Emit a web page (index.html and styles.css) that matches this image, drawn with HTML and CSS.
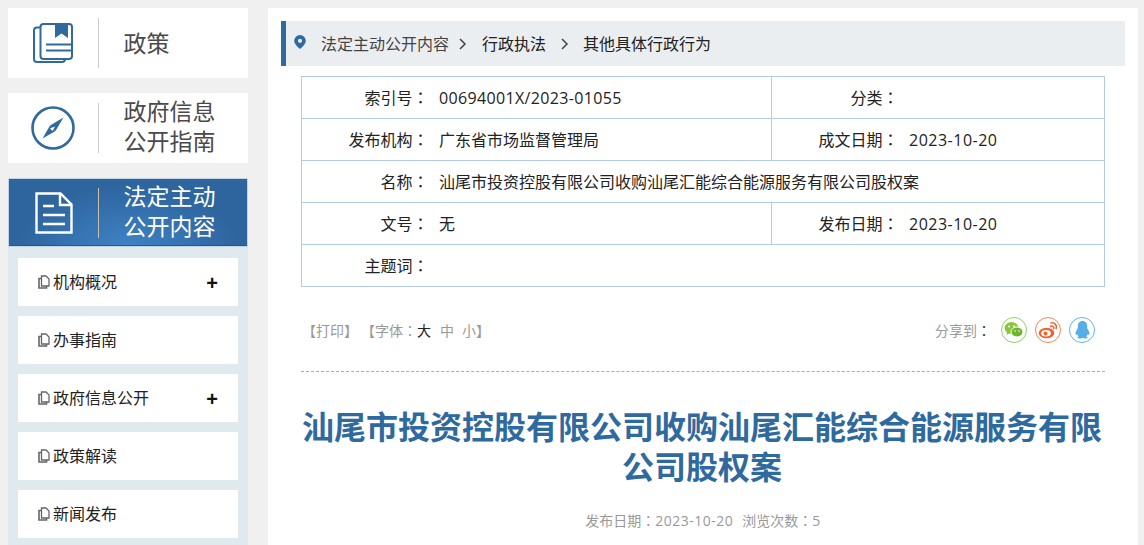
FILE: index.html
```html
<!DOCTYPE html>
<html lang="zh-CN">
<head>
<meta charset="utf-8">
<title>汕尾市投资控股有限公司收购汕尾汇能综合能源服务有限公司股权案</title>
<link rel="stylesheet" href="styles.css">
</head>
<body>
<div class="page">
  <aside class="side">
    <a class="head">
      <span class="head-icon">
        <svg width="42" height="42" viewBox="0 0 42 42" fill="none" stroke="#2f6a9f" stroke-width="2">
          <path d="M8 5.500H5a3 3 0 0 0-3 3V37a3 3 0 0 0 3 3h25a3 3 0 0 0 3-3v-.5"/>
          <rect x="8.500" y="2" width="31.500" height="35" rx="3"/>
          <path d="M23 2h13v14l-6.500-4.500L23 16z" fill="#2f6a9f" stroke="none"/>
          <path d="M14 22.500h25M14 28.500h25"/>
        </svg>
      </span>
      <span class="head-text one"><span class="ln">政策</span></span>
    </a>
    <a class="head">
      <span class="head-icon">
        <svg width="44" height="44" viewBox="0 0 44 44" fill="none">
          <circle cx="22" cy="22" r="20.500" stroke="#2f6a9f" stroke-width="2.600"/>
          <path d="M32.500 11.500 24.500 25 19 19.500z" fill="#2f6a9f"/>
          <path d="M11.500 32.500 19 19.500 24.500 25z" fill="#2f6a9f"/>
          <path d="M19 22.500 24 20.500 21.500 25z" fill="#fff"/>
        </svg>
      </span>
      <span class="head-text two"><span class="ln">政府信息</span><span class="ln">公开指南</span></span>
    </a>
    <a class="head head-on">
      <span class="head-icon">
        <svg width="38" height="42" viewBox="0 0 38 42" fill="none" stroke="#fff" stroke-width="2.400">
          <path d="M1.500 1.500h24l11 11v28h-35z"/>
          <path d="M25 2v11h11"/>
          <path d="M8 14h11M8 23h22M8 32h22"/>
        </svg>
      </span>
      <span class="head-text two"><span class="ln">法定主动</span><span class="ln">公开内容</span></span>
    </a>
    <ul class="sub">
      <li class="sub-item"><svg class="doc" width="12" height="14" viewBox="0 0 12 14" fill="none" stroke="#666" stroke-width="1.300"><path d="M3.500 1h4.500l3 3v7h-7.500z"/><path d="M3.500 3.500H1v9.500h7.500v-2" stroke-width="1.600"/></svg><span class="sub-text">机构概况</span><b class="plus">+</b></li>
      <li class="sub-item"><svg class="doc" width="12" height="14" viewBox="0 0 12 14" fill="none" stroke="#666" stroke-width="1.300"><path d="M3.500 1h4.500l3 3v7h-7.500z"/><path d="M3.500 3.500H1v9.500h7.500v-2" stroke-width="1.600"/></svg><span class="sub-text">办事指南</span></li>
      <li class="sub-item"><svg class="doc" width="12" height="14" viewBox="0 0 12 14" fill="none" stroke="#666" stroke-width="1.300"><path d="M3.500 1h4.500l3 3v7h-7.500z"/><path d="M3.500 3.500H1v9.500h7.500v-2" stroke-width="1.600"/></svg><span class="sub-text">政府信息公开</span><b class="plus">+</b></li>
      <li class="sub-item"><svg class="doc" width="12" height="14" viewBox="0 0 12 14" fill="none" stroke="#666" stroke-width="1.300"><path d="M3.500 1h4.500l3 3v7h-7.500z"/><path d="M3.500 3.500H1v9.500h7.500v-2" stroke-width="1.600"/></svg><span class="sub-text">政策解读</span></li>
      <li class="sub-item"><svg class="doc" width="12" height="14" viewBox="0 0 12 14" fill="none" stroke="#666" stroke-width="1.300"><path d="M3.500 1h4.500l3 3v7h-7.500z"/><path d="M3.500 3.500H1v9.500h7.500v-2" stroke-width="1.600"/></svg><span class="sub-text">新闻发布</span></li>
    </ul>
  </aside>

  <main class="main">
    <nav class="crumb">
      <svg class="pin" width="12" height="14" viewBox="0 0 12 14"><path fill-rule="evenodd" fill="#2f6a9f" d="M6 0a5.800 5.800 0 0 1 5.800 5.800C11.800 9 8 12.500 6 14 4 12.500.2 9 .2 5.800A5.800 5.800 0 0 1 6 0zm0 3.700a2.100 2.100 0 1 0 0 4.200 2.100 2.100 0 0 0 0-4.200z"/></svg>
      <span class="crumb-first">法定主动公开内容</span>
      <svg class="chev chev-a" width="8" height="12" viewBox="0 0 8 12" fill="none" stroke="#444" stroke-width="1.500"><path d="M1 1l5 5-5 5"/></svg>
      <span class="crumb-link">行政执法</span>
      <svg class="chev chev-b" width="8" height="12" viewBox="0 0 8 12" fill="none" stroke="#444" stroke-width="1.500"><path d="M1 1l5 5-5 5"/></svg>
      <span class="crumb-link">其他具体行政行为</span>
    </nav>

    <table class="info">
      <colgroup><col class="c1"><col class="c2"><col class="c3"><col class="c4"></colgroup>
      <tr><th>索引号<i class="p" lang="zh-TW">：</i></th><td><span class="num num-long">00694001X/2023-01055</span></td><th>分类<i class="p" lang="zh-TW">：</i></th><td></td></tr>
      <tr><th>发布机构<i class="p" lang="zh-TW">：</i></th><td>广东省市场监督管理局</td><th>成文日期<i class="p" lang="zh-TW">：</i></th><td><span class="num">2023-10-20</span></td></tr>
      <tr><th>名称<i class="p" lang="zh-TW">：</i></th><td colspan="3">汕尾市投资控股有限公司收购汕尾汇能综合能源服务有限公司股权案</td></tr>
      <tr><th>文号<i class="p" lang="zh-TW">：</i></th><td>无</td><th>发布日期<i class="p" lang="zh-TW">：</i></th><td><span class="num">2023-10-20</span></td></tr>
      <tr><th>主题词<i class="p" lang="zh-TW">：</i></th><td colspan="3"></td></tr>
    </table>

    <div class="tools">
      <div class="tools-left">
        <span><i class="p" lang="zh-TW">【</i>打印<i class="p" lang="zh-TW">】</i></span>
        <span class="fontset"><i class="p" lang="zh-TW">【</i>字体<i class="p" lang="zh-TW">：</i><b class="size-on">大</b><b class="size">中</b><b class="size">小</b><i class="p" lang="zh-TW">】</i></span>
      </div>
      <div class="share">
        <span class="share-label">分享到<i class="p colon" lang="zh-TW">：</i></span>
        <span class="ring ring-wx">
          <svg width="20" height="18" viewBox="0 0 20 18"><ellipse cx="7.500" cy="7" rx="7" ry="6" fill="#8cc63f"/><path d="M3 11l-.5 3 3.500-2z" fill="#8cc63f"/><ellipse cx="13" cy="11" rx="6" ry="5" fill="#6fb52c" stroke="#fff" stroke-width="1"/><circle cx="5" cy="5.500" r="1" fill="#fff"/><circle cx="10" cy="5.500" r="1" fill="#fff"/><circle cx="11" cy="10" r=".8" fill="#fff"/><circle cx="15" cy="10" r=".8" fill="#fff"/></svg>
        </span>
        <span class="ring ring-wb">
          <svg width="20" height="18" viewBox="0 0 20 18" fill="none"><ellipse cx="8.500" cy="12" rx="7.800" ry="5.200" fill="#f0622e"/><ellipse cx="8" cy="12.300" rx="4.800" ry="3.300" fill="#fff"/><circle cx="7.500" cy="12.500" r="2" fill="#f0622e"/><path d="M12 5.500c3-1.500 4.500.5 3.500 3" stroke="#f0622e" stroke-width="1.500"/><path d="M12.500 2c4-1 7 2 5.500 6" stroke="#f0622e" stroke-width="1.500"/></svg>
        </span>
        <span class="ring ring-qq">
          <svg width="15" height="18" viewBox="0 0 16 19"><path fill="#55aee8" d="M8 0c3.300 0 5 2.500 5 5.500v2c1.300 2 2.500 4 2.500 6 0 1.500-.8 1.500-2 .5-.3 1-.8 1.800-1.500 2.400 1 .4 1.500.8 1.500 1.300 0 .5-1.500.8-3 .8-1 0-2-.3-2.500-.8-.5.500-1.500.8-2.500.8-1.500 0-3-.3-3-.8 0-.5.500-.9 1.500-1.300C3.300 15.800 2.800 15 2.500 14c-1.200 1-2 1-2-.5 0-2 1.200-4 2.500-6v-2C3 2.500 4.700 0 8 0z"/></svg>
        </span>
      </div>
    </div>

    <h1 class="title">汕尾市投资控股有限公司收购汕尾汇能综合能源服务有限公司股权案</h1>
    <p class="meta">发布日期<i class="p" lang="zh-TW">：</i><span class="num">2023-10-20</span><span class="meta-gap">浏览次数<i class="p" lang="zh-TW">：</i><span class="num">5</span></span></p>
  </main>
</div>
</body>
</html>
```
FILE: styles.css
```css
* { box-sizing: border-box; }
html, body { margin: 0; padding: 0; height: 545px; overflow: hidden; }
body {
  background: #f0f0f0;
  font-family: "Noto Sans CJK SC", "Liberation Sans", sans-serif;
  color: #333;
}
.p { font-family: "Noto Sans CJK TC", sans-serif; font-style: normal; }
.num { font-family: "Open Sans", sans-serif; letter-spacing: .5px; }
.num-long { letter-spacing: .35px; }
.page { display: flex; padding: 8px 6px 0 8px; gap: 20px; height: 545px; align-items: stretch; }

.side { width: 240px; flex: none; display: flex; flex-direction: column; }
.head {
  display: flex; align-items: center; height: 70px; background: #fff; margin-bottom: 15px; flex: none;
}
.head-icon { width: 91px; height: 50px; flex: none; display: flex; align-items: center; justify-content: center; border-right: 1px solid #ccc; }
.head-text { padding-left: 24.5px; font-size: 23px; color: #4a4a4a; }
.head-text.one { padding-bottom: 2px; }
.head-text.two { padding-bottom: 6px; }
.ln { display: block; height: 30px; line-height: 30px; }
.head-on {
  height: 69px; margin: 0;
  border: 1px solid #c3d3df;
  background: radial-gradient(ellipse 110px 60px at 50% 100%, #3e82c4 0%, #2e659f 100%);
  box-shadow: inset 0 -1px 0 #26578c;
}
.head-on .head-icon { width: 90px; border-right-color: #c9bfae; }
.head-on .head-text { color: #fff; padding-bottom: 6px; }

.sub { list-style: none; margin: 0; padding: 11px 10px 0; background: #e0e9ee; flex: 1; display: flex; flex-direction: column; gap: 10px; }
.sub-item { height: 48px; background: #fff; flex: none; display: flex; align-items: center; padding-left: 20px; position: relative; }
.doc { margin-right: 3px; flex: none; }
.sub-text { font-size: 16px; color: #222; padding-bottom: 2px; }
.plus { position: absolute; right: 20px; top: 13px; font: bold 20px/24px "Liberation Sans", sans-serif; color: #111; }

.main { flex: 1; min-width: 0; background: #fff; padding: 13px 0 0 13px; }
.crumb {
  display: flex; align-items: center; width: 844px; height: 45px;
  background: #ebeef1; border-left: 5px solid #2f6a9f; padding-left: 8px; font-size: 16px; color: #222;
}
.crumb span { padding-bottom: 2px; }
.pin { margin-right: 15px; margin-top: -3px; flex: none; }
.crumb-first { color: #444; }
.chev { flex: none; margin: 0 15px 0 10px; }
.chev-b { margin: 0 14px 0 15px; }

.info { border-collapse: collapse; table-layout: fixed; width: 804px; margin: 10px 0 0 20px; font-size: 16px; }
.info col.c1 { width: 128px; }
.info col.c2 { width: 342px; }
.info col.c3 { width: 128px; }
.info tr { height: 42px; }
.info th, .info td { border: 1px solid #b0cce6; height: 42px; font-weight: normal; color: #222; padding: 0 0 2px; }
.info th { text-align: right; padding-right: 1px; border-right: 0; }
.info td { padding-left: 9.5px; border-left: 0; }

.tools { display: flex; justify-content: space-between; align-items: center; width: 804px; height: 85px; margin-left: 20px; padding: 1px 10px 0 1px; border-bottom: 1px dashed #aaa; font-size: 14px; color: #999; }
.tools-left { display: flex; gap: 3px; }
.fontset b { font-weight: normal; }
.size-on { color: #222; margin-right: 9px; }
.size { margin-right: 8px; }
.size:last-of-type { margin-right: 0; }
.share { display: flex; align-items: center; gap: 8px; }
.share-label { margin-right: 2px; }
.colon { color: #333; }
.ring { width: 26px; height: 26px; border-radius: 50%; border: 1px solid; display: flex; align-items: center; justify-content: center; }
.ring-wx { border-color: #8fcf6a; }
.ring-wb { border-color: #f58558; }
.ring-qq { border-color: #60b6ec; }

.title { width: 804px; margin: 33px 0 0 19px; text-align: center; font: bold 32px/40px "Noto Sans CJK SC", "Liberation Sans", sans-serif; color: #2f6a9f; }
.meta { width: 804px; margin: 25px 0 0 20px; text-align: center; font-size: 14px; color: #999; }
.meta-gap { margin-left: 9px; }
```
